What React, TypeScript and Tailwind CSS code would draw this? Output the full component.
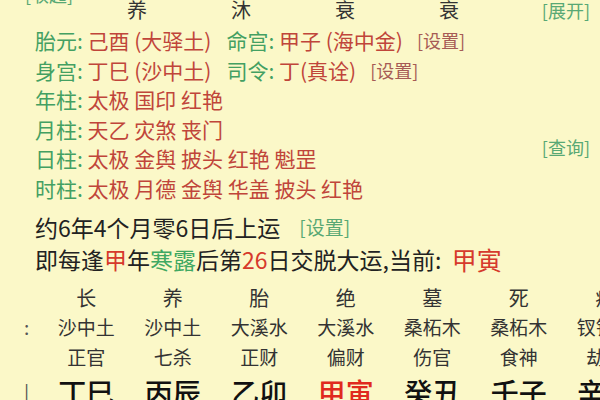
const cols = [
  { stage: "长", nayin: "沙中土", god: "正官", gz: "丁巳", red: false },
  { stage: "养", nayin: "沙中土", god: "七杀", gz: "丙辰", red: false },
  { stage: "胎", nayin: "大溪水", god: "正财", gz: "乙卯", red: false },
  { stage: "绝", nayin: "大溪水", god: "偏财", gz: "甲寅", red: true },
  { stage: "墓", nayin: "桑柘木", god: "伤官", gz: "癸丑", red: false },
  { stage: "死", nayin: "桑柘木", god: "食神", gz: "壬子", red: false },
  { stage: "病", nayin: "钗钏金", god: "劫财", gz: "辛亥", red: false },
];

const shensha = [
  { label: "年柱:", items: ["太极", "国印", "红艳"] },
  { label: "月柱:", items: ["天乙", "灾煞", "丧门"] },
  { label: "日柱:", items: ["太极", "金舆", "披头", "红艳", "魁罡"], query: true },
  { label: "时柱:", items: ["太极", "月德", "金舆", "华盖", "披头", "红艳"] },
];

function Label({ children }: { children: React.ReactNode }) {
  return <span className="text-[#43a062]">{children}</span>;
}

function Value({ children }: { children: React.ReactNode }) {
  return <span className="text-[#c0453a]">{children}</span>;
}

function Setting({ className = "" }: { className?: string }) {
  return <span className={`text-[18px] text-[#a65b55] ${className}`}>[设置]</span>;
}

export default function App() {
  return (
    <div className="h-[400px] w-[600px] overflow-hidden bg-[#fbf8c8] font-['Noto_Sans_CJK_SC','Noto_Sans',sans-serif] text-[#222]">
      {/* tail of previous section */}
      <div className="flex h-[26px] items-start text-[20px] leading-[20px] text-[#333]">
        <div className="w-[85px] pl-[25px]">
          <span className="-mt-[16px] block text-[18px] text-[#58a874]">[收起]</span>
        </div>
        {["养", "沐", "衰", "衰"].map((c, i) => (
          <div key={i} className="w-[104px] text-center">
            {c}
          </div>
        ))}
        <span className="ml-auto pr-[10px] text-[18px] text-[#58a874]">[展开]</span>
      </div>

      <div className="pl-[35px] text-[21px] leading-[29.5px]">
        <div className="flex items-center whitespace-pre">
          <Label>胎元: </Label>
          <Value>己酉 (大驿土)</Value>
          <Label>
            <span className="ml-[15px]">命宫: </span>
          </Label>
          <Value>甲子 (海中金)</Value>
          <Setting className="ml-[14px]" />
        </div>
        <div className="flex items-center whitespace-pre">
          <Label>身宫: </Label>
          <Value>丁巳 (沙中土)</Value>
          <Label>
            <span className="ml-[15px]">司令: </span>
          </Label>
          <Value>丁(真诠)</Value>
          <Setting className="ml-[14px]" />
        </div>
        {shensha.map((row) => (
          <div key={row.label} className="flex items-center whitespace-pre">
            <Label>{row.label} </Label>
            <Value>{row.items.join(" ")}</Value>
            {row.query && (
              <span className="relative -top-[11px] ml-auto pr-[10px] text-[18px] text-[#58a874]">[查询]</span>
            )}
          </div>
        ))}

        <div className="mt-[8px] flex items-center text-[23px] leading-[32px]">
          <span>约6年4个月零6日后上运</span>
          <span className="ml-[19px] text-[19px] text-[#58a874]">[设置]</span>
        </div>
        <div className="flex items-center whitespace-pre text-[23px] leading-[32px]">
          <span>即每逢</span>
          <span className="text-[#d63a2c]">甲</span>
          <span>年</span>
          <span className="text-[#3fa862]">寒露</span>
          <span>后第</span>
          <span className="text-[#d63a2c]">26</span>
          <span>日交脱大运,当前:  </span>
          <span className="text-[25px] text-[#d63a2c]">甲寅</span>
        </div>
      </div>

      <div className="mt-[8px] grid grid-cols-[43px_repeat(7,86.5px)] grid-rows-[30px_29px_30px_40px] items-center text-[19px] text-[#333]">
        <div />
        {cols.map((c) => (
          <div key={`s-${c.gz}`} className="text-center text-[20px]">
            {c.stage}
          </div>
        ))}
        <div className="pl-[24px] text-[#555]">:</div>
        {cols.map((c) => (
          <div key={`n-${c.gz}`} className="whitespace-nowrap text-center">
            {c.nayin}
          </div>
        ))}
        <div />
        {cols.map((c) => (
          <div key={`g-${c.gz}`} className="text-center">
            {c.god}
          </div>
        ))}
        <div className="pl-[24px] text-[#555]">|</div>
        {cols.map((c) => (
          <div
            key={`z-${c.gz}`}
            className={`whitespace-nowrap text-center text-[28px] font-medium ${c.red ? "text-[#e02a1e]" : "text-[#111]"}`}
          >
            {c.gz}
          </div>
        ))}
      </div>
    </div>
  );
}
